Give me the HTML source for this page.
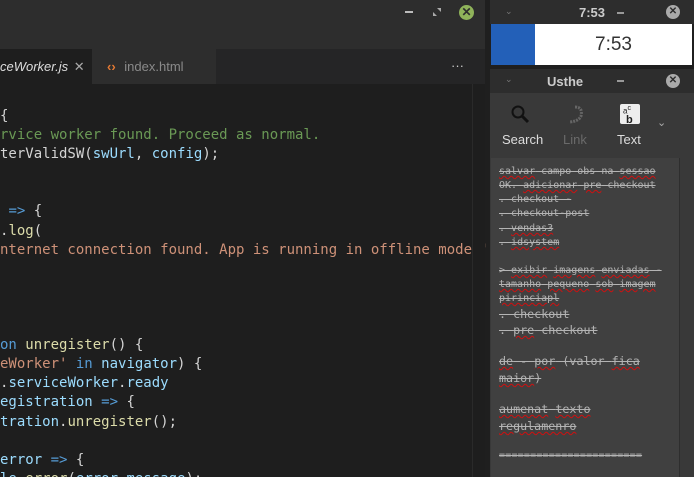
<!DOCTYPE html>
<html><head><meta charset="utf-8"><style>
*{margin:0;padding:0;box-sizing:border-box}
html,body{width:694px;height:477px;overflow:hidden}
body{background:#1f1f1f;position:relative;font-family:"Liberation Sans",sans-serif}
.a{position:absolute}
.code{font-family:"DejaVu Sans Mono",monospace;font-size:14px;white-space:pre;color:#d4d4d4;line-height:19.1px}
.c{color:#6a9955}.s{color:#ce9178}.v{color:#9cdcfe}.k{color:#569cd6}.f{color:#dcdcaa}.p{color:#569cd6}
.n{font-family:"DejaVu Sans Mono",monospace;color:#b4b4b4;white-space:pre;text-decoration:line-through;position:absolute;left:499px}
.n u{text-decoration:underline wavy #d01010;text-decoration-thickness:1px;text-underline-offset:1px}
</style></head><body>
<div class="a" style="left:0;top:0;width:485px;height:49px;background:#2d2d2d"></div>
<div class="a" style="left:405px;top:11px;width:8px;height:2px;background:#bbb"></div>
<svg class="a" style="left:432px;top:7px" width="10" height="10"><path d="M5 1H9V5Z M1 5V9H5Z" fill="#aaa"/></svg>
<div class="a" style="left:459px;top:5px;width:15px;height:15px;border-radius:50%;background:#8fb35a;color:#2d2d2d;font-size:12px;font-weight:bold;text-align:center;line-height:15px">✕</div>
<div class="a" style="left:0;top:49px;width:485px;height:35px;background:#252526"></div>
<div class="a" style="left:0;top:49px;width:92px;height:35px;background:#1e1e1e;color:#ddd;font-size:13px;font-style:italic;line-height:35px;white-space:nowrap">ceWorker.js <span style="font-style:normal;color:#aaa;margin-left:2px">✕</span></div>
<div class="a" style="left:92px;top:49px;width:124px;height:35px;background:#2d2d2d;color:#8a8a8a;font-size:13px;line-height:35px;white-space:nowrap;padding-left:15px"><span style="color:#e37933;font-weight:bold;margin-right:5px">‹›</span> index.html</div>
<div class="a" style="left:451px;top:58px;color:#ccc;font-size:13px">···</div>
<div class="a" style="left:0;top:84px;width:485px;height:393px;background:#1e1e1e"></div>
<div class="a code" style="left:0;top:107px">{
<span class="c">rvice worker found. Proceed as normal.</span>
terValidSW(<span class="v">swUrl</span>, <span class="v">config</span>);


 <span class="p">=&gt;</span> {
.<span class="f">log</span>(
<span class="s">nternet connection found. App is running in offline mode.'</span>




<span class="k">on</span> <span class="f">unregister</span>() {
<span class="s">eWorker'</span> <span class="k">in</span> <span class="v">navigator</span>) {
.<span class="v">serviceWorker</span>.<span class="v">ready</span>
<span class="v">egistration</span> <span class="p">=&gt;</span> {
<span class="v">tration</span>.<span class="f">unregister</span>();

<span class="v">error</span> <span class="p">=&gt;</span> {
<span class="v">le</span>.<span class="f">error</span>(<span class="v">error</span>.<span class="v">message</span>);</div>
<div class="a" style="left:472px;top:84px;width:13px;height:393px;background:#1e1e1e;border-left:1px solid #2a2a2a"></div>

<div class="a" style="left:490px;top:0;width:204px;height:24px;background:#2d2d2d;color:#ccc;font-size:13px;font-weight:bold;text-align:center;line-height:26px">7:53</div>
<div class="a" style="left:505px;top:6px;color:#777;font-size:9px">⌄</div>
<div class="a" style="left:617px;top:12px;width:7px;height:2px;background:#999"></div>
<div class="a" style="left:666px;top:5px;width:14px;height:14px;border-radius:50%;background:#aaa;color:#2d2d2d;font-size:10px;font-weight:bold;text-align:center;line-height:14px">✕</div>
<div class="a" style="left:491px;top:24px;width:201px;height:41px;background:#fff"></div>
<div class="a" style="left:491px;top:24px;width:44px;height:41px;background:#2360b8"></div>
<div class="a" style="left:535px;top:24px;width:157px;height:41px;color:#333;font-size:19px;text-align:center;line-height:41px">7:53</div>
<div class="a" style="left:490px;top:69px;width:204px;height:24px;background:#2d2d2d;color:#ccc;font-size:13px;font-weight:bold;line-height:26px;padding-left:57px">Usthe</div>
<div class="a" style="left:505px;top:74px;color:#777;font-size:9px">⌄</div>
<div class="a" style="left:617px;top:80px;width:7px;height:2px;background:#999"></div>
<div class="a" style="left:666px;top:74px;width:14px;height:14px;border-radius:50%;background:#aaa;color:#2d2d2d;font-size:10px;font-weight:bold;text-align:center;line-height:14px">✕</div>
<div class="a" style="left:490px;top:93px;width:204px;height:384px;background:#393939"></div>
<svg class="a" style="left:510px;top:104px" width="22" height="22"><circle cx="8" cy="8" r="5.5" fill="none" stroke="#111" stroke-width="2"/><line x1="12" y1="12" x2="18" y2="18" stroke="#111" stroke-width="3"/></svg>
<svg class="a" style="left:565px;top:104px" width="22" height="22"><path d="M10 3 Q18 3 16 12 Q14 17 5 18" fill="none" stroke="#666" stroke-width="3" stroke-dasharray="2 1"/></svg>
<div class="a" style="left:620px;top:104px;width:20px;height:20px;background:#eee;border-radius:2px;color:#222;font-size:8px;line-height:9px;padding-left:3px">a<sup style="font-size:7px">c</sup><br><b style="font-size:11px;padding-left:3px">b</b></div>
<div class="a" style="left:502px;top:132px;color:#ddd;font-size:13px">Search</div>
<div class="a" style="left:563px;top:132px;color:#6a6a6a;font-size:13px">Link</div>
<div class="a" style="left:617px;top:132px;color:#ddd;font-size:13px">Text</div>
<div class="a" style="left:657px;top:116px;color:#aaa;font-size:11px">⌄</div>
<div class="a" style="left:491px;top:158px;width:188px;height:319px;background:#404040"></div>
<div class="a" style="left:679px;top:158px;width:12px;height:319px;background:#393939;border-left:1px solid #2e2e2e"></div>
<div style="font-size:10px;line-height:14px">
<div class="n" style="top:165px"><u>salvar</u> campo obs na <u>sessao</u></div>
<div class="n" style="top:179px">OK. <u>adicionar</u> <u>pre</u> checkout</div>
<div class="n" style="top:193px">. checkout -</div>
<div class="n" style="top:207px">. checkout-post</div>
<div class="n" style="top:222px">. <u>vendas3</u></div>
<div class="n" style="top:236px">. <u>idsystem</u></div>
<div class="n" style="top:264px">&gt; <u>exibir</u> <u>imagens</u> <u>enviadas</u> -</div>
<div class="n" style="top:278px"><u>tamanho</u> <u>pequeno</u> <u>sob</u> <u>imagem</u></div>
<div class="n" style="top:292px"><u>pirinciapl</u></div>
</div>
<div style="font-size:11.7px">
<div class="n" style="top:307px">. checkout</div>
<div class="n" style="top:323px">. <u>pre</u> checkout</div>
<div class="n" style="top:354px"><u>de</u> - <u>por</u> (valor <u>fica</u></div>
<div class="n" style="top:371px"><u>maior</u>)</div>
<div class="n" style="top:402px"><u>aumenat</u> <u>texto</u></div>
<div class="n" style="top:419px"><u>regulamenro</u></div>
<div class="n" style="top:450px;font-size:10px;letter-spacing:0.2px">=======================</div>
</div>
</body></html>
